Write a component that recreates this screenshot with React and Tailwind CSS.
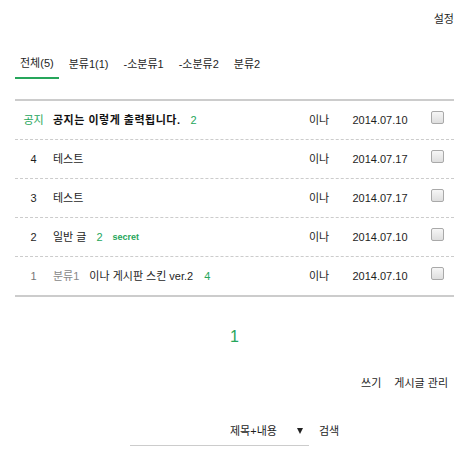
import React from "react";

const GREEN = "text-[#26a65b]";

function Checkbox() {
  return (
    <div className="w-[13px] h-[13px] rounded-[2px] border border-[#a9a9a9] bg-gradient-to-b from-[#f6f6f6] to-[#dedede]" />
  );
}

function Row({ num, numClass, children, date, last }) {
  return (
    <div
      className={
        "flex items-center " +
        (last ? "border-b-2 border-[#cccccc] h-[40px]" : "h-[39px] border-b border-dashed border-[#cccccc]")
      }
    >
      <div className={"w-[37px] text-center " + (numClass || "")}>{num}</div>
      <div className="flex-1 flex items-center pl-[1px]">{children}</div>
      <div className="w-[60px] text-center">이나</div>
      <div className="w-[60px] text-center pl-[2px]">{date}</div>
      <div className="w-[45px] pl-[22px] flex items-center -mt-[5px]">
        <Checkbox />
      </div>
    </div>
  );
}

export default function App() {
  return (
    <div
      className="w-[469px] bg-white text-[#1e1e1e] text-[11px] leading-[14px] px-[15px]"
      style={{ fontFamily: '"Liberation Sans", "Noto Sans CJK KR", sans-serif' }}
    >
      <div className="h-[38px] flex items-center justify-end">설정</div>

      <div className="flex mt-[7px] gap-[5px]">
        <div className="h-[34px] px-[5px] pt-[3px] flex items-center border-b-2 border-[#26a65b]">전체(5)</div>
        <div className="h-[34px] px-[5px] pt-[3px] flex items-center">분류1(1)</div>
        <div className="h-[34px] px-[5px] pt-[3px] flex items-center">-소분류1</div>
        <div className="h-[34px] px-[5px] pt-[3px] flex items-center">-소분류2</div>
        <div className="h-[34px] px-[5px] pt-[3px] flex items-center">분류2</div>
      </div>

      <div className="mt-[20px] border-t-2 border-[#cccccc]">
        <Row num="공지" numClass={GREEN} date="2014.07.10">
          <span className="font-bold text-[#111] tracking-[0.5px]">공지는 이렇게 출력됩니다.</span>
          <span className={"ml-[10px] " + GREEN}>2</span>
        </Row>
        <Row num="4" date="2014.07.17">
          <span>테스트</span>
        </Row>
        <Row num="3" date="2014.07.17">
          <span>테스트</span>
        </Row>
        <Row num="2" date="2014.07.10">
          <span>일반 글</span>
          <span className={"ml-[10px] " + GREEN}>2</span>
          <span className={"ml-[10px] text-[9px] font-bold " + GREEN}>secret</span>
        </Row>
        <Row num="1" numClass="text-[#777]" date="2014.07.10" last>
          <span className="text-[#888]">분류1</span>
          <span className="ml-[10px]">이나 게시판 스킨 ver.2</span>
          <span className={"ml-[11px] " + GREEN}>4</span>
        </Row>
      </div>

      <div className="mt-[5px] h-[70px] flex items-center justify-center">
        <span className={"text-[16px] " + GREEN}>1</span>
      </div>

      <div className="h-[22px] flex items-center justify-end pr-[6px] gap-[13px]">
        <span>쓰기</span>
        <span>게시글 관리</span>
      </div>

      <div className="mt-[30px] flex justify-center items-start gap-[10px]">
        <div className="w-[179px] flex items-center justify-end pb-[7px] border-b border-[#cccccc]">
          <span>제목+내용</span>
          <span className="ml-[20px] mr-[6px] w-[6px] h-0 border-l-[3px] border-r-[3px] border-t-[6px] border-l-transparent border-r-transparent border-t-[#222]" />
        </div>
        <span>검색</span>
      </div>
      <div className="h-[14px]" />
    </div>
  );
}
